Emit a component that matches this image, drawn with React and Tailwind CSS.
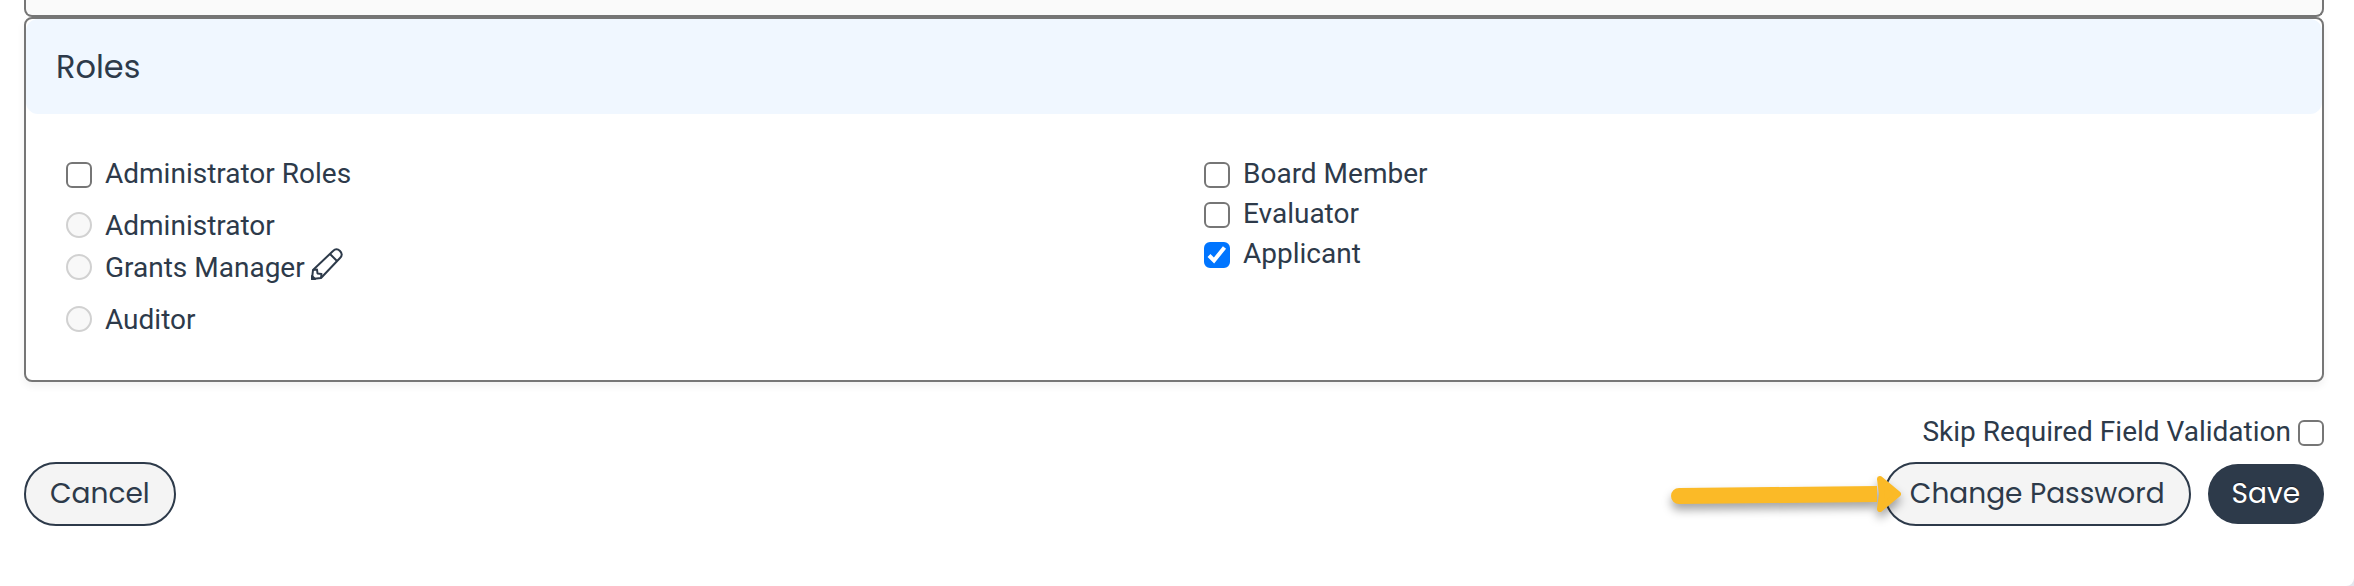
/**
 * Roles section of the user edit form.
 *
 * Shows the role pickers in two columns, followed by the form actions.
 */

// Shared look of the tick boxes and radios
const boxClasses =
  'peer block w-[26px] h-[26px] appearance-none border-2 border-[#767676] bg-white rounded-[6px] checked:bg-[#0075ff] checked:border-[#0075ff]';
const radioClasses =
  'w-[26px] h-[26px] -mt-0.5 shrink-0 appearance-none rounded-full border-2 border-[#d1d1d1] bg-[#f8f8f8]';

const extraRoles = [
  { id: 'board-member', label: 'Board Member', checked: false },
  { id: 'evaluator', label: 'Evaluator', checked: false },
  { id: 'applicant', label: 'Applicant', checked: true },
];

function Checkbox({ id, defaultChecked = false }) {
  return (
    <span className="relative mt-0.5 shrink-0">
      <input id={id} type="checkbox" defaultChecked={defaultChecked} className={boxClasses} />
      <svg
        viewBox="0 0 26 26"
        className="absolute inset-0 w-[26px] h-[26px] pointer-events-none hidden peer-checked:block"
        fill="none"
        stroke="white"
        strokeWidth="4"
      >
        <path d="M5 13.500 L10 18.500 L20.500 5.500" />
      </svg>
    </span>
  );
}

function RoleCheckbox({ id, label, checked }) {
  return (
    <div className="flex items-center gap-[13px]">
      <Checkbox id={id} defaultChecked={checked} />
      <label htmlFor={id}>{label}</label>
    </div>
  );
}

function RoleRadio({ id, label, children }) {
  return (
    <div className="flex items-center gap-[13px]">
      <input id={id} type="radio" name="admin-role" disabled className={radioClasses} />
      <label htmlFor={id}>{label}</label>
      {children}
    </div>
  );
}

function PencilIcon() {
  return (
    <svg viewBox="0 0 32 32" className="w-8 h-8" fill="none" stroke="currentColor" strokeWidth="2" strokeLinejoin="round">
      <path d="M2 22 L22 3 Q25.500 -0.500 29 3 Q32.500 6.500 29 10 L10 30 L1 31 Z" />
      <path d="M19 6 L26 13" />
      <path d="M2 22 L6 21.500 L6.500 25.500 L10.500 26 L10 30" />
      <path d="M1 28 L4 31 L1 31 Z" fill="currentColor" />
    </svg>
  );
}

function PointerArrow() {
  return (
    <svg
      viewBox="0 0 240 60"
      className="absolute right-[287px] top-1 w-[240px] h-[60px] pointer-events-none drop-shadow-[0_6px_5px_rgba(0,0,0,0.35)]"
      fill="#fbba27"
    >
      <path d="M15 22 L213 20 L213 36 L15 38 A8 8 0 0 1 15 22 Z" />
      <path d="M216 13 L234 28 L216 43 L218 28 Z" stroke="#fbba27" strokeWidth="6" strokeLinejoin="round" />
    </svg>
  );
}

export default function App() {
  return (
    <div className="bg-[#e4e7ee]">
      <main className="min-h-screen bg-white rounded-br-lg pl-6 pr-[30px] text-[28px] leading-10 text-[#2d3a4a] font-['Roboto',sans-serif]">
        {/* Bottom edge of the previous section */}
        <div className="h-[17px] bg-[#fafafa] border-2 border-t-0 border-[#767676] rounded-b-lg" />

        {/* Roles */}
        <section className="bg-white border-2 border-[#767676] rounded-lg shadow-[0_4px_8px_rgba(0,0,0,0.06)]">
          <h2 className="bg-[#f0f7ff] rounded-xl pl-[30px] pt-7 pb-[27px] text-[32px] leading-10 font-['Poppins','Inter',sans-serif]">
            Roles
          </h2>
          <div className="grid grid-cols-2 gap-x-[60px] p-10">
            <div>
              <RoleCheckbox id="admin-roles" label="Administrator Roles" />
              <div className="pt-3">
                <RoleRadio id="administrator" label="Administrator" />
              </div>
              <div className="pt-0.5">
                <RoleRadio id="grants-manager" label="Grants Manager">
                  <button type="button" aria-label="Edit Grants Manager" className="-ml-[7px] -mt-2">
                    <PencilIcon />
                  </button>
                </RoleRadio>
              </div>
              <div className="pt-3">
                <RoleRadio id="auditor" label="Auditor" />
              </div>
            </div>
            <div>
              {extraRoles.map((role) => (
                <RoleCheckbox key={role.id} {...role} />
              ))}
            </div>
          </div>
        </section>

        {/* Validation toggle */}
        <div className="flex items-center justify-end gap-[7px] mt-[30px]">
          <label htmlFor="skip-validation">Skip Required Field Validation</label>
          <Checkbox id="skip-validation" />
        </div>

        {/* Actions */}
        <div className="flex items-center justify-between mt-2.5 font-['Poppins','Inter',sans-serif]">
          <button type="button" className="h-16 px-6 rounded-full border-2 border-[#2d3a4a] bg-[#f4f4f4]">
            Cancel
          </button>
          <div className="flex items-center gap-[17px]">
            <div className="relative">
              <button type="button" className="h-16 px-6 rounded-full border-2 border-[#2d3a4a] bg-[#f4f4f4]">
                Change Password
              </button>
              <PointerArrow />
            </div>
            <button
              type="submit"
              className="h-[60px] px-6 rounded-full bg-[#2d3a4a] text-white [text-shadow:0_-1px_1px_rgba(0,0,0,0.4)]"
            >
              Save
            </button>
          </div>
        </div>
      </main>
    </div>
  );
}
